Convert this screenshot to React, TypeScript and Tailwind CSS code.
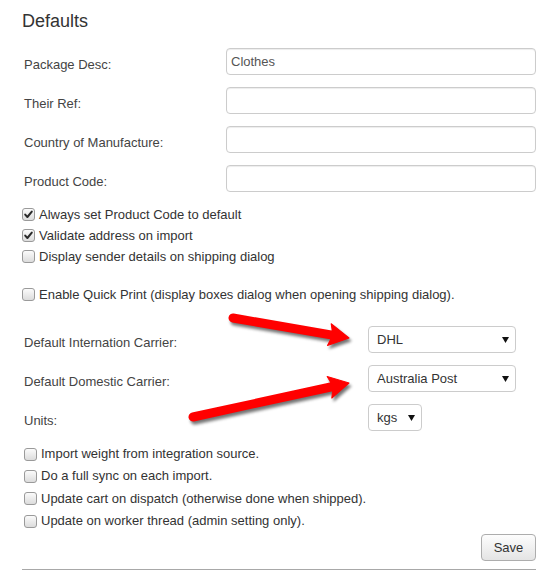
import React from "react";

const inputs = [
  { label: "Package Desc:", value: "Clothes" },
  { label: "Their Ref:", value: "" },
  { label: "Country of Manufacture:", value: "" },
  { label: "Product Code:", value: "" },
];

const carriers = [
  { label: "Default Internation Carrier:", value: "DHL", width: "w-[148px]" },
  { label: "Default Domestic Carrier:", value: "Australia Post", width: "w-[148px]" },
  { label: "Units:", value: "kgs", width: "w-[54px]" },
];

const bottomChecks = [
  "Import weight from integration source.",
  "Do a full sync on each import.",
  "Update cart on dispatch (otherwise done when shipped).",
  "Update on worker thread (admin setting only).",
];

function Checkbox({ checked }: { checked?: boolean }) {
  return (
    <span className="relative inline-flex h-[13px] w-[13px] shrink-0 items-center justify-center rounded-[3px] border border-[#9a9a9a] bg-gradient-to-b from-[#fbfbfb] to-[#dcdcdc]">
      {checked && (
        <svg width="11" height="11" viewBox="0 0 11 11" className="absolute">
          <path d="M2.2 5.6 L4.4 8 L8.8 2.6" fill="none" stroke="#2b2b2b" strokeWidth="2" strokeLinecap="round" strokeLinejoin="round" />
        </svg>
      )}
    </span>
  );
}

function CheckRow({ label, checked, className }: { label: string; checked?: boolean; className?: string }) {
  return (
    <label className={`flex items-center gap-[4px] text-[#333] ${className ?? ""}`}>
      <Checkbox checked={checked} />
      <span>{label}</span>
    </label>
  );
}

function Arrow({ x1, y1, x2, y2 }: { x1: number; y1: number; x2: number; y2: number }) {
  const len = Math.hypot(x2 - x1, y2 - y1);
  const angle = (Math.atan2(y2 - y1, x2 - x1) * 180) / Math.PI;
  const shape = (
    <>
      <line x1={0} y1={0} x2={len - 14} y2={0} strokeWidth={9} strokeLinecap="round" />
      <path d={`M${len} 0 L${len - 20} -11 Q${len - 15} 0 ${len - 20} 11 Z`} strokeWidth={1} strokeLinejoin="round" />
    </>
  );
  return (
    <g>
      <g transform={`translate(${x1 + 2} ${y1 + 3}) rotate(${angle})`} stroke="#000" fill="#000" opacity={0.55} filter="url(#blur)">
        {shape}
      </g>
      <g transform={`translate(${x1} ${y1}) rotate(${angle})`} stroke="#ff0000" fill="#ff0000">
        {shape}
      </g>
    </g>
  );
}

export default function App() {
  return (
    <div className="relative h-[585px] w-[559px] overflow-hidden bg-white font-['Liberation_Sans',Arial,sans-serif] text-[13px] text-[#333]">
      <div className="pl-[22px] pr-[23px] pt-[11px]">
        <h2 className="text-[18px] leading-[20px] text-[#333]">Defaults</h2>

        <div className="mt-[17px]">
          {inputs.map((row) => (
            <div key={row.label} className="mb-[12px] flex h-[27px] items-start">
              <span className="w-[204px] pl-[2px] pt-[9px] leading-[15px] text-[#444]">{row.label}</span>
              <div className="flex h-[27px] flex-1 items-center rounded-[4px] border border-[#ccc] pl-[4px] text-[#555] shadow-[inset_0_1px_1px_rgba(0,0,0,0.075)]">
                {row.value}
              </div>
            </div>
          ))}
        </div>

        <div className="leading-[21px]">
          <CheckRow label="Always set Product Code to default" checked />
          <CheckRow label="Validate address on import" checked />
          <CheckRow label="Display sender details on shipping dialog" />
          <CheckRow className="mt-[17px]" label="Enable Quick Print (display boxes dialog when opening shipping dialog)." />
        </div>

        <div className="mt-[21px]">
          {carriers.map((row) => (
            <div key={row.label} className="mb-[12px] flex h-[27px] items-start">
              <span className="w-[346px] pl-[2px] pt-[9px] leading-[15px] text-[#444]">{row.label}</span>
              <div className={`flex h-[27px] items-center justify-between rounded-[4px] border border-[#ccc] pl-[8px] pr-[6px] text-[#333] ${row.width}`}>
                <span>{row.value}</span>
                <svg width="7" height="6" viewBox="0 0 7 6">
                  <path d="M0 0 H7 L3.5 6 Z" fill="#111" />
                </svg>
              </div>
            </div>
          ))}
        </div>

        <div className="pl-[2px] leading-[22.33px]">
          {bottomChecks.map((t) => (
            <CheckRow key={t} label={t} />
          ))}
        </div>

        <div className="mt-[2px] flex justify-end">
          <button className="h-[27px] w-[55px] rounded-[4px] border border-[#adadad] bg-gradient-to-b from-[#fdfdfd] to-[#e4e4e4] text-[13px] text-[#333]">
            Save
          </button>
        </div>

        <div className="mt-[8px] border-t border-[#a8a8a8]" />
      </div>

      <svg className="pointer-events-none absolute left-0 top-0" width="559" height="585">
        <defs>
          <filter id="blur" x="-20%" y="-50%" width="140%" height="200%">
            <feGaussianBlur stdDeviation="1.6" />
          </filter>
        </defs>
        <Arrow x1={233} y1={318} x2={349} y2={338} />
        <Arrow x1={193} y1={417} x2={349} y2={383} />
      </svg>
    </div>
  );
}
